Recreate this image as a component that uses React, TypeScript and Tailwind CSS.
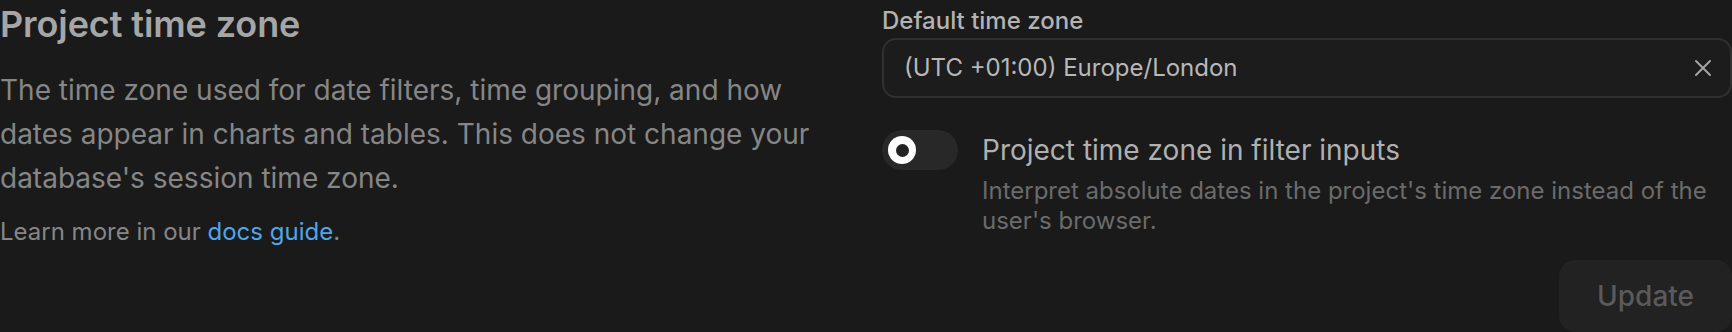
export default function App() {
  return (
    <div className="w-[1732px] h-[332px] overflow-hidden bg-[#1a1a1a] font-['Inter',sans-serif]">
      <div className="grid grid-cols-2 gap-x-8">
        <section>
          <h2 className="text-[36px] leading-[48px] font-semibold text-[#a6a6a6] tracking-[-0.1px]">
            Project time zone
          </h2>
          <p className="mt-5 max-w-[830px] text-[28px] leading-[44px] text-[#868686]">
            The time zone used for date filters, time grouping, and how dates appear in charts and
            tables. This does not change your database's session time zone.
          </p>
          <p className="mt-[16px] text-[24px] leading-[32px] text-[#868686]">
            Learn more in our <a className="text-[#4fa6ea]">docs guide</a>.
          </p>
        </section>

        <section className="flex flex-col">
          <label className="pt-[3px] text-[24px] leading-[36px] font-medium text-[#b3b3b3]">
            Default time zone
          </label>
          <div className="mt-[-1px] h-[60px] flex items-center justify-between rounded-[14px] border-2 border-[#303030] bg-[#1c1c1c] pl-[20px] pr-[18px]">
            <span className="text-[24px] text-[#b8b8b8]">(UTC +01:00) Europe/London</span>
            <svg width="18" height="18" viewBox="0 0 18 18" className="text-[#a3a3a3]">
              <path d="M2 2 L16 16 M16 2 L2 16" stroke="currentColor" strokeWidth="2" strokeLinecap="round" />
            </svg>
          </div>

          <div className="mt-[32px] flex gap-6">
            <button className="shrink-0 w-[76px] h-[40px] rounded-full bg-[#282828] flex items-center px-[6px]">
              <span className="w-[28px] h-[28px] rounded-full bg-white flex items-center justify-center">
                <span className="w-[13px] h-[13px] rounded-full bg-[#222222]" />
              </span>
            </button>
            <div className="flex-1">
              <div className="text-[28px] leading-[40px] text-[#b0b0b0]">
                Project time zone in filter inputs
              </div>
              <div className="mt-[6px] text-[24px] leading-[30px] text-[#6b6b6b]">
                Interpret absolute dates in the project's time zone instead of the user's browser.
              </div>
            </div>
          </div>

          <div className="mt-[24px] flex justify-end">
            <button className="h-[72px] rounded-[16px] bg-[#222222] px-[38px] text-[28px] font-medium text-[#5a5a5a]">
              Update
            </button>
          </div>
        </section>
      </div>
    </div>
  );
}
